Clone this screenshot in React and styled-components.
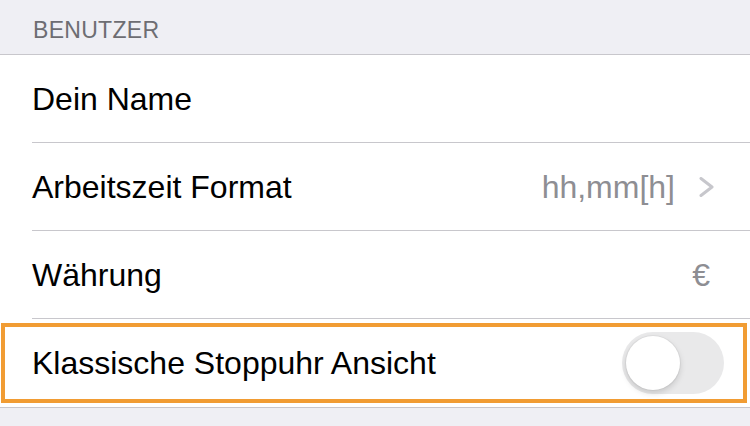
import React, { useState } from "react";
import styled, { createGlobalStyle } from "styled-components";

const GlobalStyle = createGlobalStyle`
  html, body {
    margin: 0;
    padding: 0;
    background: #efeff4;
    font-family: "Liberation Sans", Arial, sans-serif;
    -webkit-font-smoothing: antialiased;
  }
`;

const Page = styled.div`
  width: 750px;
  height: 426px;
  background: #efeff4;
  overflow: hidden;
`;

const SectionHeader = styled.div`
  height: 54px;
  box-sizing: border-box;
  padding: 17px 0 0 33px;
  font-size: 23px;
  letter-spacing: 0.3px;
  color: #6d6d72;
  text-transform: uppercase;
`;

const Section = styled.div`
  background: #fff;
  border-top: 1px solid #c8c7cc;
  border-bottom: 1px solid #c8c7cc;
`;

const Row = styled.div`
  position: relative;
  height: 88px;
  box-sizing: border-box;
  display: flex;
  align-items: center;
  padding: 0 ${(p) => p.$padRight || 35}px 0 32px;

  &::after {
    content: "";
    display: ${(p) => (p.$last ? "none" : "block")};
    position: absolute;
    left: 32px;
    right: 0;
    bottom: 0;
    height: 1px;
    background: #c8c7cc;
  }
`;

const Label = styled.span`
  flex: 1;
  font-size: 32px;
  color: #000;
`;

const Value = styled.span`
  font-size: 32px;
  color: #8e8e93;
`;

const Chevron = styled.svg`
  margin-left: 24px;
  width: 16px;
  height: 20px;
`;

const Highlight = styled.div`
  position: absolute;
  left: 1px;
  right: 3px;
  top: 4px;
  height: 80px;
  border: 4px solid #f19c33;
  box-sizing: border-box;
  pointer-events: none;
`;

const Switch = styled.button`
  position: relative;
  width: 102px;
  height: 62px;
  border: none;
  padding: 0;
  border-radius: 31px;
  background: ${(p) => (p.$on ? "#4cd964" : "#e9e9ea")};
  cursor: pointer;
  transition: background 0.2s;
`;

const Knob = styled.span`
  position: absolute;
  top: 4px;
  left: ${(p) => (p.$on ? "44px" : "4px")};
  width: 54px;
  height: 54px;
  border-radius: 50%;
  background: #fff;
  box-shadow: 0 3px 6px rgba(0, 0, 0, 0.15), 0 0 0 1px rgba(0, 0, 0, 0.04);
  transition: left 0.2s;
`;

export default function App() {
  const [classic, setClassic] = useState(false);

  return (
    <Page>
      <GlobalStyle />
      <SectionHeader>Benutzer</SectionHeader>
      <Section>
        <Row>
          <Label>Dein Name</Label>
        </Row>
        <Row>
          <Label>Arbeitszeit Format</Label>
          <Value>hh,mm[h]</Value>
          <Chevron viewBox="0 0 16 20">
            <path d="M2 1.5 L13 10 L2 18.5" fill="none" stroke="#c7c7cc" strokeWidth="3" strokeLinecap="round" strokeLinejoin="round" />
          </Chevron>
        </Row>
        <Row $padRight={40}>
          <Label>Währung</Label>
          <Value>€</Value>
        </Row>
        <Row $last $padRight={26}>
          <Label>Klassische Stoppuhr Ansicht</Label>
          <Switch $on={classic} onClick={() => setClassic(!classic)}>
            <Knob $on={classic} />
          </Switch>
          <Highlight />
        </Row>
      </Section>
    </Page>
  );
}
